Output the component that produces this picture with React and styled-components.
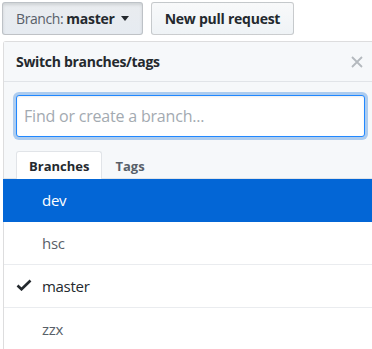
import { createGlobalStyle } from "styled-components";
import styled from "styled-components";

const GlobalStyle = createGlobalStyle`
  html, body {
    margin: 0;
    padding: 0;
    background: #fff;
    font-family: "Open Sans", "Noto Sans", sans-serif;
    color: #24292e;
    overflow: hidden;
  }
`;

const Page = styled.div`
  padding: 2px 0 0 2px;
  width: 372px;
  height: 349px;
  box-sizing: border-box;
  overflow: hidden;
`;

const Toolbar = styled.div`
  display: flex;
  gap: 8px;
`;

const Button = styled.button`
  height: 33px;
  padding: 0 ${(p) => (p.pressed ? "13px" : "13px")};
  display: flex;
  align-items: center;
  gap: 3px;
  font-family: inherit;
  font-size: 14px;
  letter-spacing: -0.25px;
  font-weight: ${(p) => (p.bold ? 700 : 400)};
  color: #24292e;
  border: 1px solid rgba(27, 31, 35, 0.2);
  border-radius: 3px;
  background: ${(p) =>
    p.pressed
      ? "linear-gradient(#e9ecef, #e6ebf1)"
      : "linear-gradient(#f8f9fa, #eff3f6)"};
  box-shadow: ${(p) =>
    p.pressed ? "inset 0 2px 3px rgba(27,31,35,0.12)" : "none"};
`;

const Muted = styled.span`
  color: #586069;
  letter-spacing: -0.4px;
`;

const Strong = styled.span`
  font-weight: 700;
`;

const Caret = styled.span`
  width: 0;
  height: 0;
  margin-left: 3px;
  border-left: 4px solid transparent;
  border-right: 4px solid transparent;
  border-top: 5px solid #24292e;
`;

const Menu = styled.div`
  margin-top: 6px;
  margin-left: 1px;
  width: 400px;
  border: 1px solid rgba(27, 31, 35, 0.15);
  border-right: none;
  border-radius: 3px 0 0 0;
  background: #fff;
`;

const MenuHeader = styled.div`
  display: flex;
  align-items: center;
  height: 40px;
  padding: 0 0 0 12px;
  width: 369px;
  box-sizing: border-box;
  background: #f6f8fa;
  border-bottom: 1px solid #e1e4e8;
`;

const Title = styled.span`
  flex: 1;
  font-size: 14px;
  font-weight: 700;
  letter-spacing: -0.3px;
`;

const Close = styled.svg`
  width: 12px;
  height: 12px;
  margin-right: 10px;
`;

const Filters = styled.div`
  padding: 13px 0 0 12px;
  background: #f6f8fa;
  width: 369px;
  box-sizing: border-box;
  border-bottom: 1px solid #e1e4e8;
`;

const Input = styled.input`
  display: block;
  width: 349px;
  height: 42px;
  box-sizing: border-box;
  padding: 0 7px;
  font-family: inherit;
  font-size: 16px;
  letter-spacing: -0.2px;
  color: #24292e;
  border: 1px solid #2188ff;
  border-radius: 3px;
  outline: none;
  background: #fff;
  box-shadow: inset 0 1px 2px rgba(27, 31, 35, 0.075),
    0 0 0 3px rgba(3, 102, 214, 0.3);
  &::placeholder {
    color: #a3aab1;
  }
`;

const Tabs = styled.div`
  display: flex;
  margin-top: 13px;
  height: 28px;
  align-items: flex-end;
`;

const Tab = styled.div`
  height: 28px;
  box-sizing: border-box;
  padding: 0 12px;
  display: flex;
  align-items: center;
  font-size: 13px;
  font-weight: 700;
  color: ${(p) => (p.active ? "#24292e" : "#586069")};
  background: ${(p) => (p.active ? "#fff" : "transparent")};
  border: 1px solid ${(p) => (p.active ? "#e1e4e8" : "transparent")};
  border-bottom: none;
  border-radius: 3px 3px 0 0;
  margin-bottom: -1px;
`;

const List = styled.div`
  display: flex;
  flex-direction: column;
`;

const Item = styled.div`
  height: 43px;
  box-sizing: border-box;
  display: flex;
  align-items: center;
  gap: 10px;
  font-size: 15px;
  letter-spacing: -0.3px;
  color: ${(p) => (p.selected ? "#fff" : "#24292e")};
  background: ${(p) => (p.selected ? "#0366d6" : "#fff")};
  border-bottom: 1px solid ${(p) => (p.selected ? "#0366d6" : "#eaecef")};
  margin-left: ${(p) => (p.selected ? "-1px" : "0")};
  padding-left: ${(p) => (p.selected ? "13px" : "12px")};
`;

const Check = styled.svg`
  width: 16px;
  height: 12px;
  margin-top: -2px;
  visibility: ${(p) => (p.shown ? "visible" : "hidden")};
`;

const Name = styled.span`
  color: ${(p) => (p.light ? "#fff" : p.current ? "#24292e" : "#586069")};
`;

const branches = [
  { name: "dev", selected: true },
  { name: "hsc" },
  { name: "master", current: true },
  { name: "zzx" },
];

export default function App() {
  return (
    <>
      <GlobalStyle />
      <Page>
        <Toolbar>
          <Button pressed>
            <Muted>Branch:</Muted>
            <Strong>master</Strong>
            <Caret />
          </Button>
          <Button bold>New pull request</Button>
        </Toolbar>
        <Menu>
          <MenuHeader>
            <Title>Switch branches/tags</Title>
            <Close viewBox="0 0 12 12">
              <path
                d="M1 1 L11 11 M11 1 L1 11"
                stroke="#b4b9be"
                strokeWidth="1.8"
                fill="none"
              />
            </Close>
          </MenuHeader>
          <Filters>
            <Input placeholder="Find or create a branch..." />
            <Tabs>
              <Tab active>Branches</Tab>
              <Tab>Tags</Tab>
            </Tabs>
          </Filters>
          <List>
            {branches.map((b) => (
              <Item key={b.name} selected={b.selected}>
                <Check viewBox="0 0 16 12" shown={b.current}>
                  <path
                    d="M1.5 6.5 L5.5 10.3 L14.5 1.5"
                    stroke="#24292e"
                    strokeWidth="2.6"
                    fill="none"
                  />
                </Check>
                <Name light={b.selected} current={b.current}>
                  {b.name}
                </Name>
              </Item>
            ))}
          </List>
        </Menu>
      </Page>
    </>
  );
}
